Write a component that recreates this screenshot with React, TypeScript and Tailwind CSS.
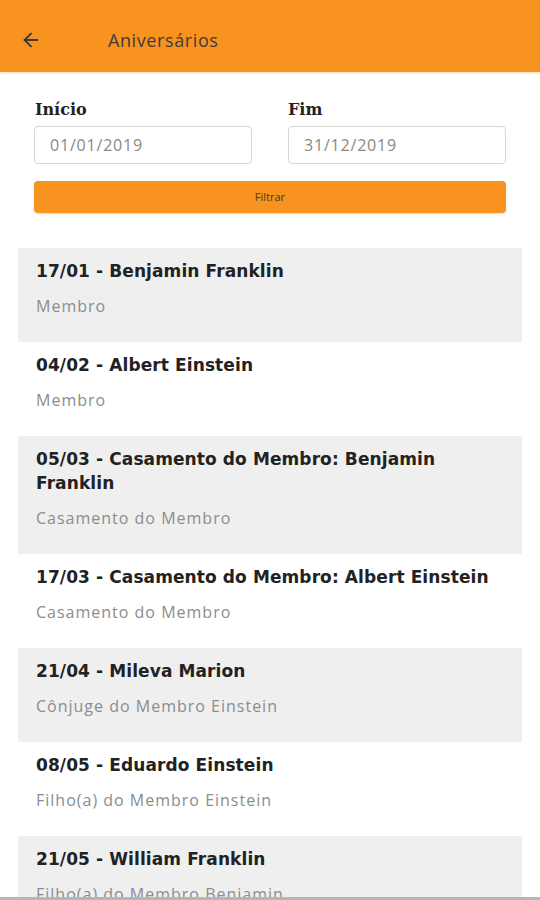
import { FiArrowLeft } from 'react-icons/fi';

type Aniversario = { data: string; nome: string; tipo: string };

const aniversarios: Aniversario[] = [
    { data: '17/01', nome: 'Benjamin Franklin', tipo: 'Membro' },
    { data: '04/02', nome: 'Albert Einstein', tipo: 'Membro' },
    { data: '05/03', nome: 'Casamento do Membro: Benjamin Franklin', tipo: 'Casamento do Membro' },
    { data: '17/03', nome: 'Casamento do Membro: Albert Einstein', tipo: 'Casamento do Membro' },
    { data: '21/04', nome: 'Mileva Marion', tipo: 'Cônjuge do Membro Einstein' },
    { data: '08/05', nome: 'Eduardo Einstein', tipo: 'Filho(a) do Membro Einstein' },
    { data: '21/05', nome: 'William Franklin', tipo: 'Filho(a) do Membro Benjamin' },
];

function App() {
    return (
        <div className="w-[540px] h-[900px] overflow-hidden bg-white flex flex-col font-['Open_Sans',sans-serif]">
            <header className="h-[72px] shrink-0 bg-[#f7931e] flex items-center pt-[8px] shadow-[0_1px_2px_rgba(247,147,30,0.35)] z-10">
                <button className="ml-[20px] text-[#3a3a3a]">
                    <FiArrowLeft size={22} strokeWidth={2.1} />
                </button>
                <h1 className="ml-[66px] text-[18px] tracking-[0.6px] text-[#3d3d3d]">Aniversários</h1>
            </header>

            <div className="px-[34px] pt-[27px] pb-[35px] bg-white">
                <div className="grid grid-cols-2 gap-[36px]">
                    <div className="flex flex-col">
                        <label className="font-['DejaVu_Serif',serif] font-bold text-[16px] text-[#222] leading-[22px] ml-px">Início</label>
                        <input readOnly value="01/01/2019" className="mt-[5px] h-[38px] border border-[#d6d6d6] rounded-[4px] px-[15px] text-[16px] tracking-[0.8px] text-[#888] bg-white outline-none" />
                    </div>
                    <div className="flex flex-col">
                        <label className="font-['DejaVu_Serif',serif] font-bold text-[16px] text-[#222] leading-[22px]">Fim</label>
                        <input readOnly value="31/12/2019" className="mt-[5px] h-[38px] border border-[#d6d6d6] rounded-[4px] px-[15px] text-[16px] tracking-[0.8px] text-[#888] bg-white outline-none" />
                    </div>
                </div>
                <button className="mt-[17px] w-full h-[32px] rounded-[4px] bg-[#f7931e] text-[11px] text-[#4a3a2a] shadow-[0_1px_2px_rgba(0,0,0,0.15)]">Filtrar</button>
            </div>

            <div className="flex-1 overflow-hidden">
                <ul className="mx-[18px] flex flex-col">
                    {aniversarios.map((a, i) => (
                        <li key={a.data + a.nome} className={(i % 2 === 0 ? 'bg-[#efefef]' : 'bg-white') + ' px-[18px] pt-[11px] pb-[25px]'}>
                            <p className="font-['DejaVu_Sans',sans-serif] font-bold text-[17px] tracking-[0.1px] leading-[24px] text-[#222]">{a.data} - {a.nome}</p>
                            <p className="mt-[12px] text-[16px] tracking-[1px] leading-[22px] text-[#8c8c8c]">{a.tipo}</p>
                        </li>
                    ))}
                </ul>
            </div>
            <div className="h-[3px] shrink-0 bg-[#b5b5b5]" />
        </div>
    );
}

export default App;
